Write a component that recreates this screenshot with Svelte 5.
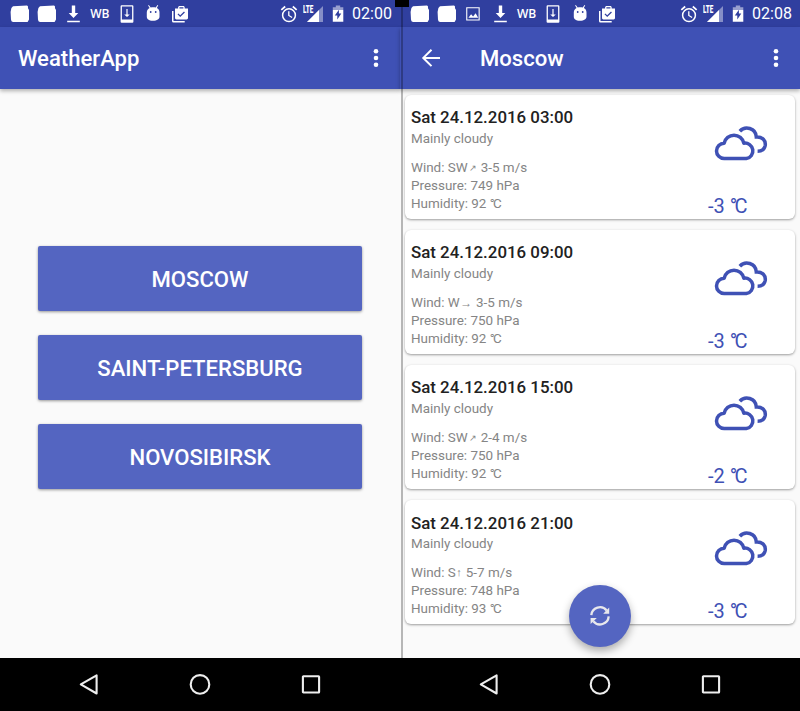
<script>
  const cities = ['MOSCOW', 'SAINT-PETERSBURG', 'NOVOSIBIRSK'];
  const forecast = [
    { date: 'Sat 24.12.2016 03:00', dir: 'SW', arrow: 'ne', wind: '3-5', pressure: 749, humidity: 92, temp: '-3' },
    { date: 'Sat 24.12.2016 09:00', dir: 'W', arrow: 'e', wind: '3-5', pressure: 750, humidity: 92, temp: '-3' },
    { date: 'Sat 24.12.2016 15:00', dir: 'SW', arrow: 'ne', wind: '2-4', pressure: 750, humidity: 92, temp: '-2' },
    { date: 'Sat 24.12.2016 21:00', dir: 'S', arrow: 'n', wind: '5-7', pressure: 748, humidity: 93, temp: '-3' }
  ];
  const arrows = { ne: '↗', e: '→', n: '↑' };
  const leftIcons = ['blob', 'blob', 'download', 'wb', 'device', 'android', 'bag'];
  const rightIcons = ['blob', 'blob', 'image', 'download', 'wb', 'device', 'android', 'bag'];
</script>

{#snippet notice(name)}
  <span class="slot">
    {#if name === 'wb'}
      <span class="wb">WB</span>
    {:else}
      <svg width="20" height="20" viewBox="0 0 20 20" fill="#fff">
        {#if name === 'blob'}
          <path d="M3 2.2 L17 1.6 Q18.4 1.8 18 4.2 L19 6 V15.4 L17.6 18 H3 Q1 17.4 1 15.4 L.6 8 L1.4 4 Z" />
        {:else if name === 'download'}
          <path d="M8.8 1.5h3.4v7.6h3.1l-4.8 5-4.8-5h3.1zM4.2 16.8h12.6v1.5H4.2z" />
        {:else if name === 'device'}
          <path fill-rule="evenodd" d="M4.6 1.3h10.8a1 1 0 0 1 1 1v15.4a1 1 0 0 1-1 1H4.6a1 1 0 0 1-1-1V2.3a1 1 0 0 1 1-1zM4.9 2.6v13h10.2v-13zM9.4 5h1.2v5.5h2.2L10 13l-2.8-2.5h2.2z" />
        {:else if name === 'android'}
          <path fill-rule="evenodd" d="M3.8 8.5C3.8 6.5 5 5 6.6 4.1L5.1 1.5l.7-.4 1.9 2.5c1.7-.5 3.3-.5 5 0l1.8-2.5.7.4-1.4 2.6c1.8 1 2.7 2.5 2.7 4.4v4.2c0 2.2-2.3 4-6.6 4s-6.1-1.7-6.1-4zM6.8 8a.9.9 0 1 0 1.8 0 .9.9 0 0 0-1.8 0m5 0a.9.9 0 1 0 1.8 0 .9.9 0 0 0-1.8 0" />
        {:else if name === 'bag'}
          <path fill-rule="evenodd" d="M2 7h1.5v9.9h11.2v1.5H3.5A1.5 1.5 0 0 1 2 16.9zM8.1 4.6V3.5c0-.9.7-1.5 1.5-1.5h3.6c.9 0 1.5.7 1.5 1.5v1.1h3.3V14c0 .8-.6 1.4-1.4 1.4H6.4c-.8 0-1.4-.6-1.4-1.4V4.6zm1.3 0h4V3.3h-4zM8.4 9.4l-.9.9 2.7 2.7 4.7-4.6-.9-.9-3.8 3.7z" />
        {:else}
          <path fill-rule="evenodd" d="M3.2 3.2h13.5V16.5H3.2zM4.3 4.3v11.1h11.3V4.3zM5.4 13.7l2.7-3.5 2 2.2 2.5-3.2 2.6 4.5z" />
        {/if}
      </svg>
    {/if}
  </span>
{/snippet}

{#snippet statusBar(icons, time)}
  <div class="status">
    <div class="notices">
      {#each icons as icon}{@render notice(icon)}{/each}
    </div>
    <div class="system">
      <svg width="18" height="20" viewBox="0 0 18 20" fill="none" stroke="#fff">
        <circle cx="9" cy="11.2" r="6.4" stroke-width="1.5" />
        <path d="M8.8 7.2v4.3l3.3 2" stroke-width="1.3" />
        <path d="M1.3 5.9 5.2 2.5M16.7 5.9 12.8 2.5" stroke-width="1.7" />
      </svg>
      <span class="signal">
        <span class="lte">LTE</span>
        <svg width="16" height="16" viewBox="0 0 16 16">
          <path d="M16 -1V15H0Z" fill="#fff" opacity=".42" />
          <path d="M12 3V15H0Z" fill="#fff" />
        </svg>
      </span>
      <svg class="battery" width="12" height="18" viewBox="0 0 12 18" fill="#fff">
        <path opacity=".5" d="M3.8 .5h4.4v1.7H11.3V5H.8V2.2h3z" />
        <path fill-rule="evenodd" d="M.8 5h5.9L2.8 10.4h2.5v4.2L9.3 8.6H6.9V5H11.3v11.7H.8z" />
      </svg>
      <span class="time">{time}</span>
    </div>
  </div>
{/snippet}

{#snippet menu()}
  <svg class="menu" width="8" height="22" viewBox="0 0 8 22" fill="#fff">
    <circle cx="4" cy="4.3" r="2.3" /><circle cx="4" cy="11" r="2.3" /><circle cx="4" cy="17.7" r="2.3" />
  </svg>
{/snippet}

{#snippet navBar()}
  <div class="nav">
    <svg width="22" height="24" viewBox="0 0 22 24"><path d="M2.8 12.4 18.6 3.3V21.5Z" /></svg>
    <svg width="24" height="24" viewBox="0 0 24 24"><circle cx="12" cy="12.4" r="9.3" /></svg>
    <svg width="22" height="24" viewBox="0 0 22 24"><rect x="2.9" y="4.3" width="16.2" height="16.2" rx=".5" /></svg>
  </div>
{/snippet}

<div class="screen">
  <section class="phone">
    {@render statusBar(leftIcons, '02:00')}
    <header>
      <h1>WeatherApp</h1>
      {@render menu()}
    </header>
    <main class="cities">
      {#each cities as city}<button>{city}</button>{/each}
    </main>
    {@render navBar()}
  </section>

  <section class="phone">
    {@render statusBar(rightIcons, '02:08')}
    <header>
      <svg class="back" width="20" height="20" viewBox="0 0 20 20" fill="none" stroke="#fff" stroke-width="2">
        <path d="M10.5 1.7 2.3 9.9l8.2 8.2M2.5 9.9H19" />
      </svg>
      <h1>Moscow</h1>
      {@render menu()}
    </header>
    <main class="list">
      {#each forecast as f}
        <article>
          <div class="info">
            <h2>{f.date}</h2>
            <p class="sky">Mainly cloudy</p>
            <p>Wind: {f.dir}<span class="arrow {f.arrow}">{arrows[f.arrow]}</span> {f.wind} m/s</p>
            <p>Pressure: {f.pressure} hPa</p>
            <p>Humidity: {f.humidity} <span class="deg">°</span>C</p>
          </div>
          <div class="now">
            <svg width="54" height="36" viewBox="0 0 54 36" fill="none" stroke="#3f51b5" stroke-width="3.5">
              <path d="M10.2 32.6A7.6 7.6 0 0 1 10.2 17.2A10 10 0 0 1 29.8 17.2A7.75 7.75 0 0 1 32.3 32.6Z" stroke-linejoin="round" />
              <path d="M25.8 5.2C31-.4 41.8 1.8 42.3 11C48.5 10.6 52 14.6 51.2 19.6C50.4 23 47.3 25.2 43.6 25.2" />
            </svg>
            <span class="temp">{f.temp} <span class="deg">°</span>C</span>
          </div>
        </article>
      {/each}
    </main>
    {@render navBar()}
  </section>

  <div class="seam"></div>
  <div class="notch"></div>
  <div class="fab">
    <svg width="22" height="22" viewBox="0 0 22 22" fill="none" stroke="#e8e8ec" stroke-width="2.3">
      <path d="M2.3 10.2A8.7 8.7 0 0 1 17.7 5.4M19.7 11.4A8.7 8.7 0 0 1 4.3 16.2" />
      <path d="M20.2 2.5V8.8H14.2ZM1.6 19V12.9H7.8Z" fill="#e8e8ec" stroke="none" />
    </svg>
  </div>
</div>

<style>
  .screen {
    position: relative;
    display: flex;
    width: 800px;
    height: 711px;
    overflow: hidden;
    background: #fafafa;
    font-family: Roboto, "Liberation Sans", sans-serif;
  }
  .phone {
    width: 400px;
    height: 711px;
    display: flex;
    flex-direction: column;
  }
  svg { display: block; flex: none; }
  h1, h2, p { margin: 0; font-weight: 400; }
  .status {
    height: 27px;
    flex: none;
    background: #303f9f;
    display: flex;
    justify-content: space-between;
    color: #fff;
  }
  .notices { display: flex; padding-left: 6.6px; }
  .slot { width: 26.67px; height: 27px; display: flex; justify-content: center; align-items: center; }
  .wb { font: 600 12px/27px "Open Sans", sans-serif; }
  .system { display: flex; align-items: center; padding-right: 9px; }
  .signal { position: relative; width: 20px; height: 18px; margin-left: 5px; display: flex; align-items: flex-end; justify-content: flex-end; }
  .signal svg { overflow: visible; }
  .lte {
    position: absolute;
    left: 0;
    top: 0;
    font: 900 10px/9px Roboto, sans-serif;
    transform: scaleX(.63);
    transform-origin: 0 0;
  }
  .battery { margin-left: 9px; }
  .time { margin-left: 8.6px; font-size: 16px; line-height: 28px; width: 38.9px; white-space: nowrap; }
  header {
    position: relative;
    z-index: 1;
    height: 62px;
    flex: none;
    display: flex;
    align-items: center;
    background: #3f51b5;
    color: #fff;
    box-shadow: 0 2px 4px rgba(0, 0, 0, .3);
    padding: 0 20.5px 0 18px;
    box-sizing: border-box;
  }
  header h1 { font-size: 22.1px; line-height: 62px; font-weight: 500; }
  .back { margin: 0 39px 0 3px; }
  .menu { margin-left: auto; }
  .cities {
    flex: 1;
    display: flex;
    flex-direction: column;
    justify-content: center;
    gap: 24.8px;
    padding: 0 38px 12px;
  }
  button {
    height: 64.2px;
    border: 0;
    border-radius: 2px;
    padding: 1px 0 0;
    background: #5465c1;
    color: #fff;
    font: 500 22.1px/62px Roboto, sans-serif;
    box-shadow: 0 1px 3px rgba(0, 0, 0, .4);
  }
  .list { flex: 1; padding: 5.6px 5.5px 0 5px; display: flex; flex-direction: column; gap: 11.2px; }
  article {
    height: 124px;
    box-sizing: border-box;
    padding: 11.4px 5.5px 0 6px;
    border-radius: 6px;
    background: #fff;
    display: flex;
    justify-content: space-between;
    box-shadow: 0 1px 2.5px rgba(0, 0, 0, .38);
  }
  .info { color: #858585; }
  h2 { margin-bottom: .7px; font-size: 16.87px; line-height: 22px; font-weight: 500; color: #212121; }
  p { font-size: 13.45px; line-height: 18px; white-space: pre; }
  .sky { margin-bottom: 11px; line-height: 19px; }
  .arrow { display: inline-block; font-size: 9px; line-height: 9px; text-align: center; vertical-align: 1px; }
  .ne { width: 9.7px; }
  .e { width: 13px; font-size: 12px; vertical-align: 0; }
  .n { width: 6.7px; font-size: 11px; }
  .deg { letter-spacing: -.13em; }
  .now { width: 81px; padding-top: 19.7px; color: #3f51b5; }
  .now svg { margin-left: 6px; }
  .temp { display: block; margin-top: 32px; font-size: 20px; line-height: 24px; white-space: pre; }
  .nav {
    height: 53px;
    flex: none;
    background: #000;
    display: flex;
    align-items: center;
    justify-content: space-between;
    padding: 0 78px 1px;
    box-sizing: border-box;
    position: relative;
    z-index: 2;
  }
  .nav svg { fill: none; stroke: #eee; stroke-width: 2.1; stroke-linejoin: round; }
  .seam { position: absolute; left: 401px; top: 0; width: 2px; height: 658px; background: rgba(0, 0, 0, .27); z-index: 3; }
  .notch { position: absolute; left: 395px; top: 0; width: 14px; height: 6.5px; background: #000; z-index: 4; }
  .fab {
    position: absolute;
    left: 569px;
    top: 584.5px;
    width: 62px;
    height: 62px;
    border-radius: 50%;
    background: #5465c1;
    display: flex;
    align-items: center;
    justify-content: center;
    box-shadow: 0 4px 8px rgba(0, 0, 0, .32);
    z-index: 1;
  }
</style>
